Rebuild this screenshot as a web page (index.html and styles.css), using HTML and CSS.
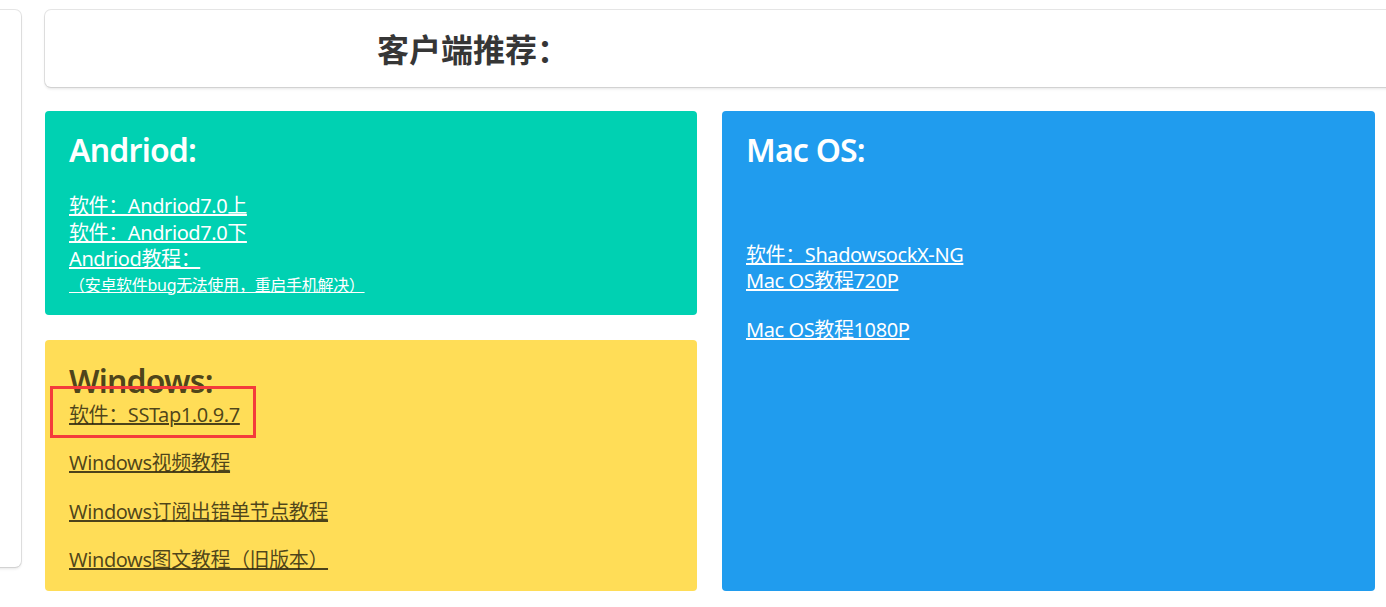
FILE: index.html
```html
<!DOCTYPE html>
<html lang="zh-CN">
<head>
<meta charset="utf-8">
<title>客户端推荐</title>
<link rel="stylesheet" href="styles.css">
</head>
<body>
<div class="page">
  <aside class="side-box"></aside>
  <main class="main">
    <div class="head-box">
      <h2 class="head-title">客户端推荐：</h2>
    </div>
    <div class="cards">
      <div class="col">
        <section class="note note-green">
          <h3 class="note-title">Andriod:</h3>
          <p class="links">
            <a href="#">软件：Andriod7.0上</a><br>
            <a href="#">软件：Andriod7.0下</a><br>
            <a href="#">Andriod教程：</a>
          </p>
          <p class="small-link"><a href="#">（安卓软件bug无法使用，重启手机解决）</a></p>
        </section>
        <section class="note note-yellow">
          <h3 class="note-title">Windows:</h3>
          <div class="win-links">
            <p class="para"><a href="#">软件：SSTap1.0.9.7</a></p>
            <p class="para"><a href="#">Windows视频教程</a></p>
            <p class="para"><a href="#">Windows订阅出错单节点教程</a></p>
            <p class="para"><a href="#">Windows图文教程（旧版本）</a></p>
          </div>
          <span class="mark"></span>
        </section>
      </div>
      <section class="note note-blue">
        <h3 class="note-title">Mac OS:</h3>
        <p class="para links">&nbsp;</p>
        <p class="para links">
          <a href="#">软件：ShadowsockX-NG</a><br>
          <a href="#">Mac OS教程720P</a>
        </p>
        <p class="para links"><a href="#">Mac OS教程1080P</a></p>
      </section>
    </div>
  </main>
</div>
</body>
</html>
```

FILE: styles.css
```css
html, body {
  margin: 0;
  padding: 0;
  background: #ffffff;
  overflow: hidden;
}

body {
  font-family: "Noto Sans", "Noto Sans CJK SC", sans-serif;
  color: #4a4a4a;
}

.page {
  display: flex;
  align-items: flex-start;
  gap: 24px;
  padding-top: 10px;
}

.side-box {
  flex: 0 0 200px;
  margin-left: -179px;
  height: 557px;
  box-sizing: border-box;
  background: #fff;
  border-radius: 6px;
  box-shadow: 0 2px 3px rgba(10, 10, 10, 0.1), 0 0 0 1px rgba(10, 10, 10, 0.1);
}

.main {
  flex: 0 0 1380px;
  display: flex;
  flex-direction: column;
  gap: 24px;
}

.head-box {
  height: 77px;
  box-sizing: border-box;
  display: flex;
  align-items: center;
  padding-left: 332px;
  background: #fff;
  border-radius: 6px;
  box-shadow: 0 2px 3px rgba(10, 10, 10, 0.1), 0 0 0 1px rgba(10, 10, 10, 0.1);
}

.head-title {
  margin: 0;
  font-size: 32px;
  font-weight: 700;
  color: #363636;
  line-height: 1;
  padding-top: 3px;
}

.cards {
  display: grid;
  grid-template-columns: 652px 653px;
  column-gap: 25px;
}

.col {
  display: flex;
  flex-direction: column;
  gap: 25px;
}

.note {
  position: relative;
  border-radius: 4px;
  padding: 21px 24px 18px 24px;
  color: #fff;
}

.note a {
  color: inherit;
  text-decoration: underline;
}

.note-green { background: #00d1b2; }
.note-blue { background: #209cee; }
.note-yellow {
  background: #ffdd57;
  color: rgba(0, 0, 0, 0.7);
  padding-top: 23px;
  padding-bottom: 17px;
}

.note-title {
  margin: 0 0 25px 0;
  font-size: 32px;
  line-height: 36px;
  font-weight: 600;
  letter-spacing: -0.8px;
}

.note-yellow .note-title {
  margin-bottom: 3px;
}

.links {
  margin: 0;
  font-size: 20px;
  line-height: 26.6px;
  letter-spacing: -0.4px;
}

.small-link {
  margin: 0;
  font-size: 16px;
  line-height: 24px;
  letter-spacing: -0.3px;
}

.para {
  margin: 0 0 22px 0;
  font-size: 20px;
  line-height: 26.5px;
  letter-spacing: -0.4px;
}

.para:last-child {
  margin-bottom: 0;
}

.mark {
  position: absolute;
  left: 5px;
  top: 46px;
  width: 206px;
  height: 52px;
  box-sizing: border-box;
  border: 3px solid #f43b3b;
}
```
